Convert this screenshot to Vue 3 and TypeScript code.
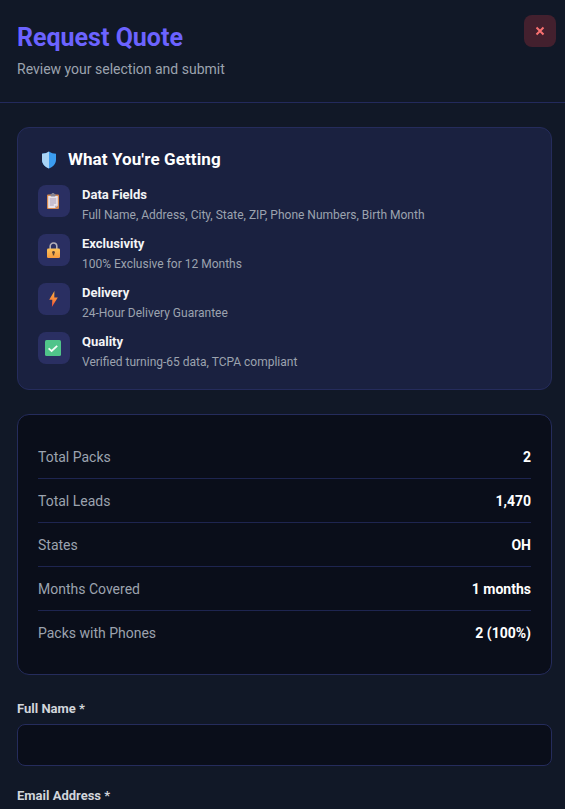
<script setup lang="ts">
const perks = [
  { id: 'clip', title: 'Data Fields', text: 'Full Name, Address, City, State, ZIP, Phone Numbers, Birth Month' },
  { id: 'lock', title: 'Exclusivity', text: '100% Exclusive for 12 Months' },
  { id: 'bolt', title: 'Delivery', text: '24-Hour Delivery Guarantee' },
  { id: 'check', title: 'Quality', text: 'Verified turning-65 data, TCPA compliant' },
]
const stats = [
  ['Total Packs', '2'],
  ['Total Leads', '1,470'],
  ['States', 'OH'],
  ['Months Covered', '1 months'],
  ['Packs with Phones', '2 (100%)'],
]
</script>

<template>
  <div class="modal">
    <header class="head">
      <div>
        <h1>Request Quote</h1>
        <p>Review your selection and submit</p>
      </div>
      <button class="close" aria-label="Close">
        <svg width="10" height="10" viewBox="0 0 10 10"><path d="M1.5 1.5l7 7M8.5 1.5l-7 7" stroke="#f87171" stroke-width="2" fill="none"/></svg>
      </button>
    </header>
    <main class="body">
      <section class="card perks">
        <h2>
          <svg class="shield" width="16" height="18" viewBox="0 0 16 18">
            <path d="M8 .5C5.8 2 3.4 2.6 1 2.8v6c0 4 2.8 6.9 7 8.7 4.2-1.8 7-4.7 7-8.7v-6C12.6 2.6 10.2 2 8 .5z" fill="#3b9cf0"/>
            <path d="M8 .5C5.8 2 3.4 2.6 1 2.8v6c0 4 2.8 6.9 7 8.7z" fill="#a9d3f5"/>
          </svg>
          What You're Getting
        </h2>
        <div class="perk" v-for="p in perks" :key="p.id">
          <div class="tile">
            <svg v-if="p.id === 'clip'" width="12" height="16" viewBox="0 0 12 16">
              <rect x="0" y="1.5" width="12" height="14.5" rx="1" fill="#d98a50"/>
              <path d="M1.2 3h9.6v9.8L8 15H1.2z" fill="#e8e2ea"/>
              <path d="M8 15l2.8-2.2H8z" fill="#b9b2c0"/>
              <path d="M2.8 6h6.4M2.8 8h6.4M2.8 10h6.4M2.8 12h4" stroke="#a79bb5" stroke-width="1"/>
              <rect x="3.5" y="0.8" width="5" height="2.8" rx="0.8" fill="#85828f"/>
              <rect x="5" y="0" width="2" height="1.5" fill="#85828f"/>
            </svg>
            <svg v-else-if="p.id === 'lock'" width="13" height="16" viewBox="0 0 13 16">
              <path d="M3.2 7.5V4.3a3.3 3.3 0 0 1 6.6 0v3.2" fill="none" stroke="#b4afb8" stroke-width="1.6"/>
              <defs>
                <linearGradient id="lockFill" x1="0" y1="0" x2="0" y2="1">
                  <stop offset="0" stop-color="#fcc35a"/>
                  <stop offset="1" stop-color="#f79a3e"/>
                </linearGradient>
              </defs>
              <rect x="0" y="6.5" width="13" height="9.5" rx="1.3" fill="url(#lockFill)"/>
              <circle cx="6.5" cy="10.4" r="1.4" fill="#5f4636"/>
              <rect x="5.8" y="10.6" width="1.4" height="2.8" fill="#5f4636"/>
            </svg>
            <svg v-else-if="p.id === 'bolt'" width="9" height="16" viewBox="0 0 9 16">
              <defs>
                <linearGradient id="boltFill" x1="0" y1="0" x2="0" y2="1">
                  <stop offset="0" stop-color="#fdb03f"/>
                  <stop offset="0.6" stop-color="#f9803a"/>
                  <stop offset="1" stop-color="#e8443c"/>
                </linearGradient>
              </defs>
              <path d="M5.4 0L0.2 8.8h3.1L2.9 16 8.8 6.4H5.3z" fill="url(#boltFill)"/>
            </svg>
            <svg v-else width="16" height="16" viewBox="0 0 16 16">
              <rect width="16" height="16" rx="1.5" fill="#50c48a"/>
              <path d="M3.6 8.4l3 2.6 5.6-5.2" fill="none" stroke="#f4fbf7" stroke-width="1.8"/>
            </svg>
          </div>
          <div class="perk-text">
            <strong>{{ p.title }}</strong>
            <span>{{ p.text }}</span>
          </div>
        </div>
      </section>

      <section class="card stats">
        <div class="row" v-for="s in stats" :key="s[0]">
          <span>{{ s[0] }}</span>
          <b>{{ s[1] }}</b>
        </div>
      </section>

      <label class="field">
        <span>Full Name *</span>
        <input type="text" />
      </label>
      <label class="field">
        <span>Email Address *</span>
        <input type="email" />
      </label>
    </main>
  </div>
</template>

<style>
html, body { margin: 0; background: #111827; height: 809px; overflow: hidden; }
</style>

<style scoped>
.modal {
  width: 565px;
  height: 809px;
  overflow: hidden;
  background: #111827;
  font-family: Roboto, "Noto Sans", sans-serif;
}
.head {
  position: relative;
  height: 103px;
  box-sizing: border-box;
  padding: 22px 17px 0;
  border-bottom: 1px solid #232a5c;
  background: #111827;
}
h1 {
  margin: 0;
  font-size: 25px;
  line-height: 32px;
  font-weight: 700;
  color: #6c63ff;
}
.head p {
  margin: 6px 0 0;
  font-size: 14px;
  line-height: 19px;
  color: #9ca3af;
}
.close {
  position: absolute;
  top: 15px;
  left: 524px;
  width: 32px;
  height: 32px;
  padding: 0;
  border: 0;
  border-radius: 8px;
  background: #43202e;
  display: flex;
  align-items: center;
  justify-content: center;
}
.body {
  padding: 24px 13px 0 17px;
}
.card {
  box-sizing: border-box;
  border-radius: 12px;
  border: 1px solid #252c5c;
}
.perks {
  height: 263px;
  padding: 20px;
  background: #1a2140;
}
h2 {
  margin: 0 0 14px;
  display: flex;
  align-items: center;
  gap: 11px;
  padding-left: 3px;
  height: 23px;
  font-size: 17px;
  line-height: 23px;
  letter-spacing: 0.1px;
  font-weight: 700;
  color: #fff;
}
.perk {
  display: flex;
  gap: 12px;
  height: 49px;
}
.tile {
  width: 32px;
  height: 32px;
  flex: none;
  box-sizing: border-box;
  padding-right: 2px;
  border-radius: 8px;
  background: #2a2f62;
  display: flex;
  align-items: center;
  justify-content: center;
}
.perk-text {
  display: flex;
  flex-direction: column;
  margin-top: 1px;
}
.perk-text strong {
  font-size: 13px;
  line-height: 18px;
  font-weight: 700;
  color: #f3f4f6;
}
.perk-text span {
  margin-top: 3px;
  font-size: 12px;
  line-height: 16px;
  color: #9ca3af;
}
.stats {
  margin-top: 24px;
  height: 261px;
  padding: 20px;
  background: #0a0e1a;
}
.row {
  display: flex;
  justify-content: space-between;
  align-items: center;
  height: 44px;
  box-sizing: border-box;
  border-bottom: 1px solid #1e2550;
  font-size: 14px;
  color: #9ca3af;
}
.row:last-child { border-bottom: 0; }
.row b { color: #fff; font-weight: 700; }
.field {
  display: block;
  margin-top: 25px;
}
.field + .field { margin-top: 21px; }
.field span {
  display: block;
  font-size: 13px;
  line-height: 18px;
  font-weight: 700;
  color: #d1d5db;
  margin-bottom: 6px;
}
.field input {
  display: block;
  box-sizing: border-box;
  width: 100%;
  height: 42px;
  border: 1px solid #252c5c;
  border-radius: 8px;
  background: #0a0e1a;
}
</style>
